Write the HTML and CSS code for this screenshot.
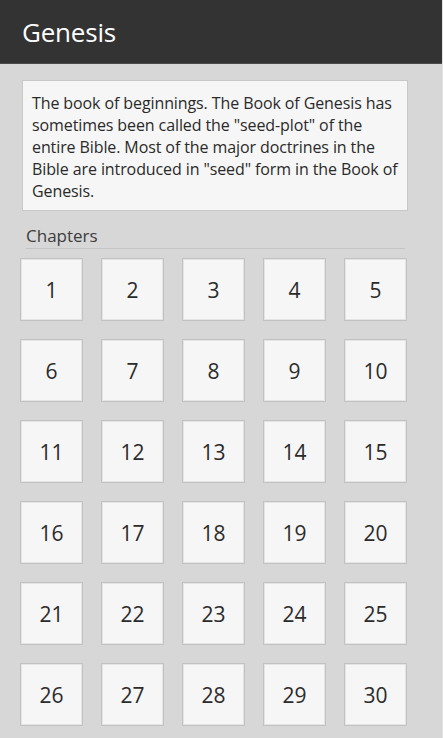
FILE: index.html
```html
<!DOCTYPE html>
<html lang="en">
<head>
<meta charset="utf-8">
<title>Genesis</title>
<link rel="stylesheet" href="styles.css">
</head>
<body>
<div class="page">
  <header class="appbar">
    <h1 class="title">Genesis</h1>
  </header>
  <main class="content">
    <p class="summary">The book of beginnings. The Book of Genesis has sometimes been called the "seed-plot" of the entire Bible. Most of the major doctrines in the Bible are introduced in "seed" form in the Book of Genesis.</p>
    <h2 class="section">Chapters</h2>
    <div class="grid">
      <div class="tile">1</div><div class="tile">2</div><div class="tile">3</div><div class="tile">4</div><div class="tile">5</div>
      <div class="tile">6</div><div class="tile">7</div><div class="tile">8</div><div class="tile">9</div><div class="tile">10</div>
      <div class="tile">11</div><div class="tile">12</div><div class="tile">13</div><div class="tile">14</div><div class="tile">15</div>
      <div class="tile">16</div><div class="tile">17</div><div class="tile">18</div><div class="tile">19</div><div class="tile">20</div>
      <div class="tile">21</div><div class="tile">22</div><div class="tile">23</div><div class="tile">24</div><div class="tile">25</div>
      <div class="tile">26</div><div class="tile">27</div><div class="tile">28</div><div class="tile">29</div><div class="tile">30</div>
    </div>
  </main>
</div>
</body>
</html>
```

FILE: styles.css
```css
html, body {
  margin: 0;
  padding: 0;
  height: 100%;
  overflow: hidden;
}
body {
  background: #d7d7d7;
  font-family: "Open Sans", "Noto Sans", sans-serif;
  color: #2e2e2e;
}
.page {
  display: flex;
  flex-direction: column;
  height: 738px;
  border-right: 1px solid #e2e2e2;
}
.appbar {
  height: 63px;
  background: #333333;
  border-bottom: 1px solid #4a4a4a;
  display: flex;
  align-items: center;
  padding-left: 22px;
}
.title {
  margin: 0;
  font-size: 26px;
  font-weight: 400;
  color: #ffffff;
  letter-spacing: -0.2px;
}
.content {
  padding: 16px 0 0 20px;
}
.summary {
  margin: 0 0 0 2px;
  width: 366px;
  background: #f6f6f6;
  border: 1px solid #c8c8c8;
  padding: 11px 9px 8px 9px;
  font-size: 16px;
  line-height: 22px;
  letter-spacing: -0.1px;
  color: #2a2a2a;
}
.section {
  margin: 14px 0 0 6px;
  width: 379px;
  font-size: 17px;
  font-weight: 400;
  line-height: 22px;
  color: #3d3d3d;
  border-bottom: 1px solid #c4c4c4;
  padding-bottom: 1px;
}
.grid {
  margin-top: 9px;
  display: grid;
  grid-template-columns: repeat(5, 63px);
  grid-auto-rows: 63px;
  gap: 18px;
}
.tile {
  box-sizing: border-box;
  background: #f6f6f6;
  border: 1px solid #c2c2c2;
  box-shadow: inset 0 0 0 1px #e4e4e4;
  display: flex;
  align-items: center;
  justify-content: center;
  font-size: 21px;
  color: #2b2b2b;
}
```
